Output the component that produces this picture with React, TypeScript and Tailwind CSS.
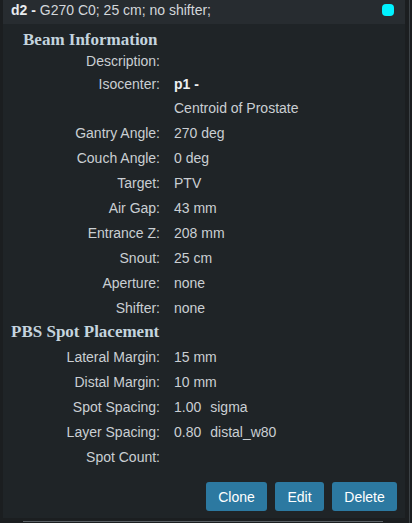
const beamRows: [string, React.ReactNode, string?][] = [
  ["Description:", "", "h-[22px]"],
  ["Isocenter:", <span className="font-bold text-[#eef1f3]">p1 -</span>, "h-[23px]"],
  ["", "Centroid of Prostate"],
  ["Gantry Angle:", "270 deg"],
  ["Couch Angle:", "0 deg"],
  ["Target:", "PTV"],
  ["Air Gap:", "43 mm"],
  ["Entrance Z:", "208 mm"],
  ["Snout:", "25 cm"],
  ["Aperture:", "none"],
  ["Shifter:", "none"],
];

const spotRows: [string, React.ReactNode][] = [
  ["Lateral Margin:", "15 mm"],
  ["Distal Margin:", "10 mm"],
  [
    "Spot Spacing:",
    <>
      <span>1.00</span>
      <span className="ml-[9px]">sigma</span>
    </>,
  ],
  [
    "Layer Spacing:",
    <>
      <span>0.80</span>
      <span className="ml-[9px]">distal_w80</span>
    </>,
  ],
  ["Spot Count:", ""],
];

const buttons = [
  { text: "Clone", w: "w-[61px]" },
  { text: "Edit", w: "w-[49px]" },
  { text: "Delete", w: "w-[65px]" },
];

function Row({ label, value, h }: { label: string; value: React.ReactNode; h?: string }) {
  return (
    <div className={`flex items-center ${h ?? "h-[25px]"}`}>
      <div className="w-[157px] shrink-0 text-right">{label}</div>
      <div className="ml-[14px] flex items-center">{value}</div>
    </div>
  );
}

const serif = { fontFamily: '"Liberation Serif", "Times New Roman", serif' };

export default function App() {
  return (
    <div
      className="relative h-[523px] w-[412px] overflow-hidden bg-[#1b1e20] text-[14px] leading-[16px] text-[#cacfd3]"
      style={{ fontFamily: '"Liberation Sans", Arial, sans-serif' }}
    >
      <div className="ml-[3px] w-[402px] bg-[#1f2427] pb-[7px]">
        {/* header */}
        <div className="flex h-[24px] items-start justify-between bg-[#272c30] pl-[8px] pr-[11px] pt-[2px]">
          <div>
            <span className="font-bold text-[#e8ebee]">d2 -</span>{" "}
            <span className="text-[#d3d7db]">G270 C0; 25 cm; no shifter;</span>
          </div>
          <div className="mt-[2px] h-[12px] w-[12px] rounded-[4px] bg-[#00f2ff]" />
        </div>

        <div
          className="mt-[6px] flex h-[20px] items-center pl-[20px] text-[17px] font-bold text-[#c4d4de]"
          style={serif}
        >
          Beam Information
        </div>
        {beamRows.map(([l, v, h], i) => (
          <Row key={i} label={l} value={v} h={h} />
        ))}

        <div
          className="flex h-[24px] items-center pl-[8px] text-[17px] font-bold text-[#c4d4de]"
          style={serif}
        >
          PBS Spot Placement
        </div>
        {spotRows.map(([l, v], i) => (
          <Row key={i} label={l} value={v} />
        ))}

        <div className="mt-[13px] flex justify-end gap-[8px] pr-[8px]">
          {buttons.map((b) => (
            <button
              key={b.text}
              className={`h-[29px] ${b.w} rounded-[3px] bg-[#2c79a1] text-center text-[14px] text-white`}
            >
              {b.text}
            </button>
          ))}
        </div>
      </div>
      {/* right scroll gutter line */}
      <div className="absolute right-[2px] top-0 h-full w-[1px] bg-[#3c4246]" />
      {/* bottom line */}
      <div className="absolute bottom-[1px] left-[23px] h-[1px] w-[360px] bg-[#5b6267]" />
    </div>
  );
}
